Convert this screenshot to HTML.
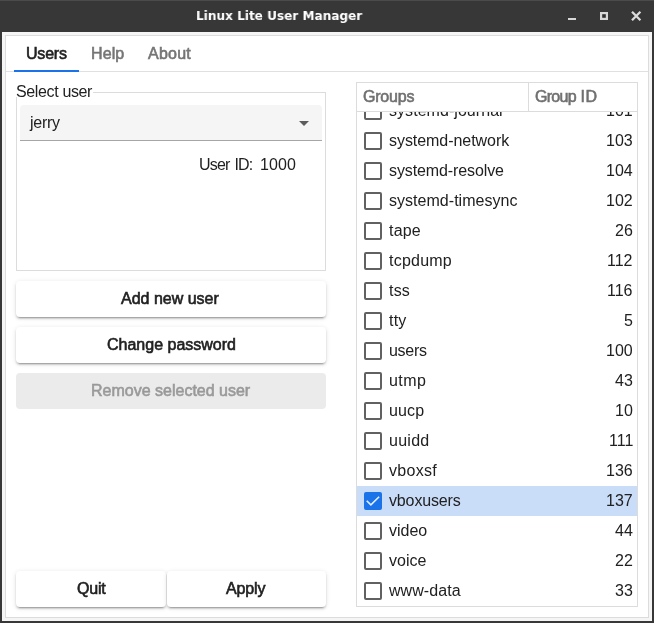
<!DOCTYPE html>
<html><head><meta charset="utf-8"><title>Linux Lite User Manager</title>
<style>
html,body{margin:0;padding:0;}
body{width:654px;height:623px;background:#373737;position:relative;overflow:hidden;font-family:"Liberation Sans",sans-serif;font-size:16px;color:#212121;}
.abs{position:absolute;}
.t{position:absolute;white-space:pre;line-height:20px;height:20px;will-change:transform;}
.m{-webkit-text-stroke:0.6px currentColor;}
#title{top:6px;color:#fff;font-family:"DejaVu Sans","Liberation Sans",sans-serif;font-weight:bold;font-size:13px;transform-origin:0 50%;transform:scaleX(0.93);}
#win{position:absolute;left:2px;top:32px;width:650px;height:589px;background:#f5f5f5;}
#frame{position:absolute;left:5px;top:35px;width:644px;height:583px;background:#fff;border:1px solid #dcdcdc;box-sizing:border-box;}
#tabline{position:absolute;left:6px;top:71px;width:642px;height:1px;background:#e0e0e0;}
.tab{top:44px;color:#757575;}
#t1{color:#212121;}
#tabul{position:absolute;left:14px;top:70px;width:65px;height:2px;background:#1a73e8;}
#gb{position:absolute;left:16px;top:92px;width:310px;height:179px;border:1px solid #dcdcdc;box-sizing:border-box;}
#gbt{top:82px;height:15px;line-height:20px;background:#fff;padding-right:1px;}
#combo{position:absolute;left:20px;top:105px;width:302px;height:36px;background:#f5f5f5;border-bottom:1px solid #a6a6a6;border-radius:4px 4px 0 0;box-sizing:border-box;}
#jerry{top:113px;}
#arrow{position:absolute;left:299px;top:121px;width:0;height:0;border-left:5px solid transparent;border-right:5px solid transparent;border-top:5px solid #5c5c5c;}
#uid{top:155px;}
.btn{position:absolute;height:36px;background:#fff;border-radius:4px;box-shadow:0 3px 1px -2px rgba(0,0,0,0.2),0 2px 2px rgba(0,0,0,0.14),0 1px 5px rgba(0,0,0,0.12);}
.btn.dis{background:#ebebeb;box-shadow:none;}
#b3{color:#999;}
#tbl{position:absolute;left:356px;top:82px;width:282px;height:525px;border:1px solid #dcdcdc;box-sizing:border-box;overflow:hidden;background:#fff;}
#hdr{position:absolute;left:0;top:0;width:280px;height:28px;background:#fff;border-bottom:1px solid #dcdcdc;z-index:2;}
#hsep{position:absolute;left:171px;top:0;width:1px;height:28px;background:#dcdcdc;}
.h{color:#707070;top:87px;z-index:3;}
#rows{position:absolute;left:0;top:13px;width:280px;}
.row{position:relative;height:30px;width:280px;}
.nm,.id{will-change:transform;}
.row.sel{background:#c9dcf8;}
.cb{position:absolute;left:7px;top:6px;width:18px;height:18px;box-sizing:border-box;border:2px solid #616161;border-radius:2px;background:#fff;}
.cb.on{border:none;background:#1a73e8;}
.cb svg{display:block;}
.nm{position:absolute;left:32px;top:0;line-height:30px;white-space:nowrap;}
.id{position:absolute;right:4px;top:0;line-height:30px;white-space:nowrap;}
</style></head><body>
<div class="t" id="title" style="left:196px;letter-spacing:0px;">Linux Lite User Manager</div>
<svg class="abs" style="left:560px;top:0" width="94" height="32" viewBox="0 0 94 32">
<rect x="8" y="18" width="8" height="2" fill="#d6d6d6"/>
<rect x="41.100" y="13.100" width="5.800" height="5.800" fill="#2e2e2e" stroke="#d6d6d6" stroke-width="2.200"/>
<path d="M72 11.800 L80.400 20.200 M80.400 11.800 L72 20.200" stroke="#dcdcdc" stroke-width="2.300" fill="none"/>
</svg>
<div class="abs" style="left:0;top:0;width:654px;height:1px;background:#4b4b4b"></div>
<div id="win"></div>
<div id="frame"></div>
<div id="tabline"></div>
<div class="t tab m" id="t1" style="left:25.5px;letter-spacing:-0.2px;">Users</div><div class="t tab m" id="t2" style="left:90.5px;letter-spacing:0.1px;">Help</div><div class="t tab m" id="t3" style="left:148px;letter-spacing:0.25px;">About</div>
<div id="tabul"></div>
<div id="gb"></div>
<div class="t" id="gbt" style="left:15.5px;letter-spacing:-0.36px;">Select user</div>
<div id="combo"></div>
<div class="t" id="jerry" style="left:29.5px;letter-spacing:-0.25px;">jerry</div>
<div id="arrow"></div>
<div class="t" id="uid" style="left:199px;letter-spacing:0px;"><span style="letter-spacing:-0.8px">User</span><span style="letter-spacing:-0.8px;margin-left:1.2px"> ID: </span><span style="letter-spacing:0.15px;margin-left:-0.8px"> 1000</span></div>
<div class="btn" style="left:16px;top:281px;width:310px;"></div>
<div class="btn" style="left:16px;top:327px;width:310px;"></div>
<div class="btn dis" style="left:16px;top:373px;width:310px;"></div>
<div class="btn" style="left:16px;top:571px;width:150px;"></div>
<div class="btn" style="left:167px;top:571px;width:159px;"></div>
<div class="t m" id="b1" style="top:289px;left:121px;letter-spacing:0px;">Add new user</div>
<div class="t m" id="b2" style="top:335px;left:107px;letter-spacing:0px;">Change password</div>
<div class="t m" id="b3" style="top:381px;left:91px;letter-spacing:0px;">Remove selected user</div>
<div class="t m" id="b4" style="top:579px;left:77.3px;letter-spacing:-0.2px;">Quit</div>
<div class="t m" id="b5" style="top:579px;left:226.3px;letter-spacing:-0.15px;">Apply</div>
<div id="tbl">
<div id="hdr"><div id="hsep"></div></div>
<div id="rows">
<div class="row"><span class="cb"></span><span class="nm" style="letter-spacing:0.05px">systemd-journal</span><span class="id">101</span></div>
<div class="row"><span class="cb"></span><span class="nm" style="letter-spacing:-0.05px">systemd-network</span><span class="id">103</span></div>
<div class="row"><span class="cb"></span><span class="nm" style="letter-spacing:-0.11px">systemd-resolve</span><span class="id">104</span></div>
<div class="row"><span class="cb"></span><span class="nm" style="letter-spacing:0.03px">systemd-timesync</span><span class="id">102</span></div>
<div class="row"><span class="cb"></span><span class="nm" style="letter-spacing:0.2px">tape</span><span class="id">26</span></div>
<div class="row"><span class="cb"></span><span class="nm" style="letter-spacing:0.23px">tcpdump</span><span class="id">112</span></div>
<div class="row"><span class="cb"></span><span class="nm" style="letter-spacing:0.2px">tss</span><span class="id">116</span></div>
<div class="row"><span class="cb"></span><span class="nm" style="letter-spacing:0.2px">tty</span><span class="id">5</span></div>
<div class="row"><span class="cb"></span><span class="nm" style="letter-spacing:-0.28px">users</span><span class="id">100</span></div>
<div class="row"><span class="cb"></span><span class="nm" style="letter-spacing:0.45px">utmp</span><span class="id">43</span></div>
<div class="row"><span class="cb"></span><span class="nm" style="letter-spacing:0.15px">uucp</span><span class="id">10</span></div>
<div class="row"><span class="cb"></span><span class="nm" style="letter-spacing:0.28px">uuidd</span><span class="id">111</span></div>
<div class="row"><span class="cb"></span><span class="nm" style="letter-spacing:0.28px">vboxsf</span><span class="id">136</span></div>
<div class="row sel"><span class="cb on"><svg viewBox="0 0 18 18" width="18" height="18"><path d="M2.700 8.700 L6.900 12.800 L15.100 4.700" fill="none" stroke="#e6effd" stroke-width="1.600"/></svg></span><span class="nm" style="letter-spacing:-0.14px">vboxusers</span><span class="id">137</span></div>
<div class="row"><span class="cb"></span><span class="nm" style="letter-spacing:0px">video</span><span class="id">44</span></div>
<div class="row"><span class="cb"></span><span class="nm" style="letter-spacing:0px">voice</span><span class="id">22</span></div>
<div class="row"><span class="cb"></span><span class="nm" style="letter-spacing:0.07px">www-data</span><span class="id">33</span></div>
</div>
</div>
<div class="t m h" id="h1" style="left:363px;letter-spacing:-0.2px;">Groups</div>
<div class="t m h" id="h2" style="left:535px;letter-spacing:0px;"><span style="letter-spacing:-0.7px">Group</span><span style="margin-left:0px"> I</span><span style="margin-left:0.6px">D</span></div>
</body></html>
